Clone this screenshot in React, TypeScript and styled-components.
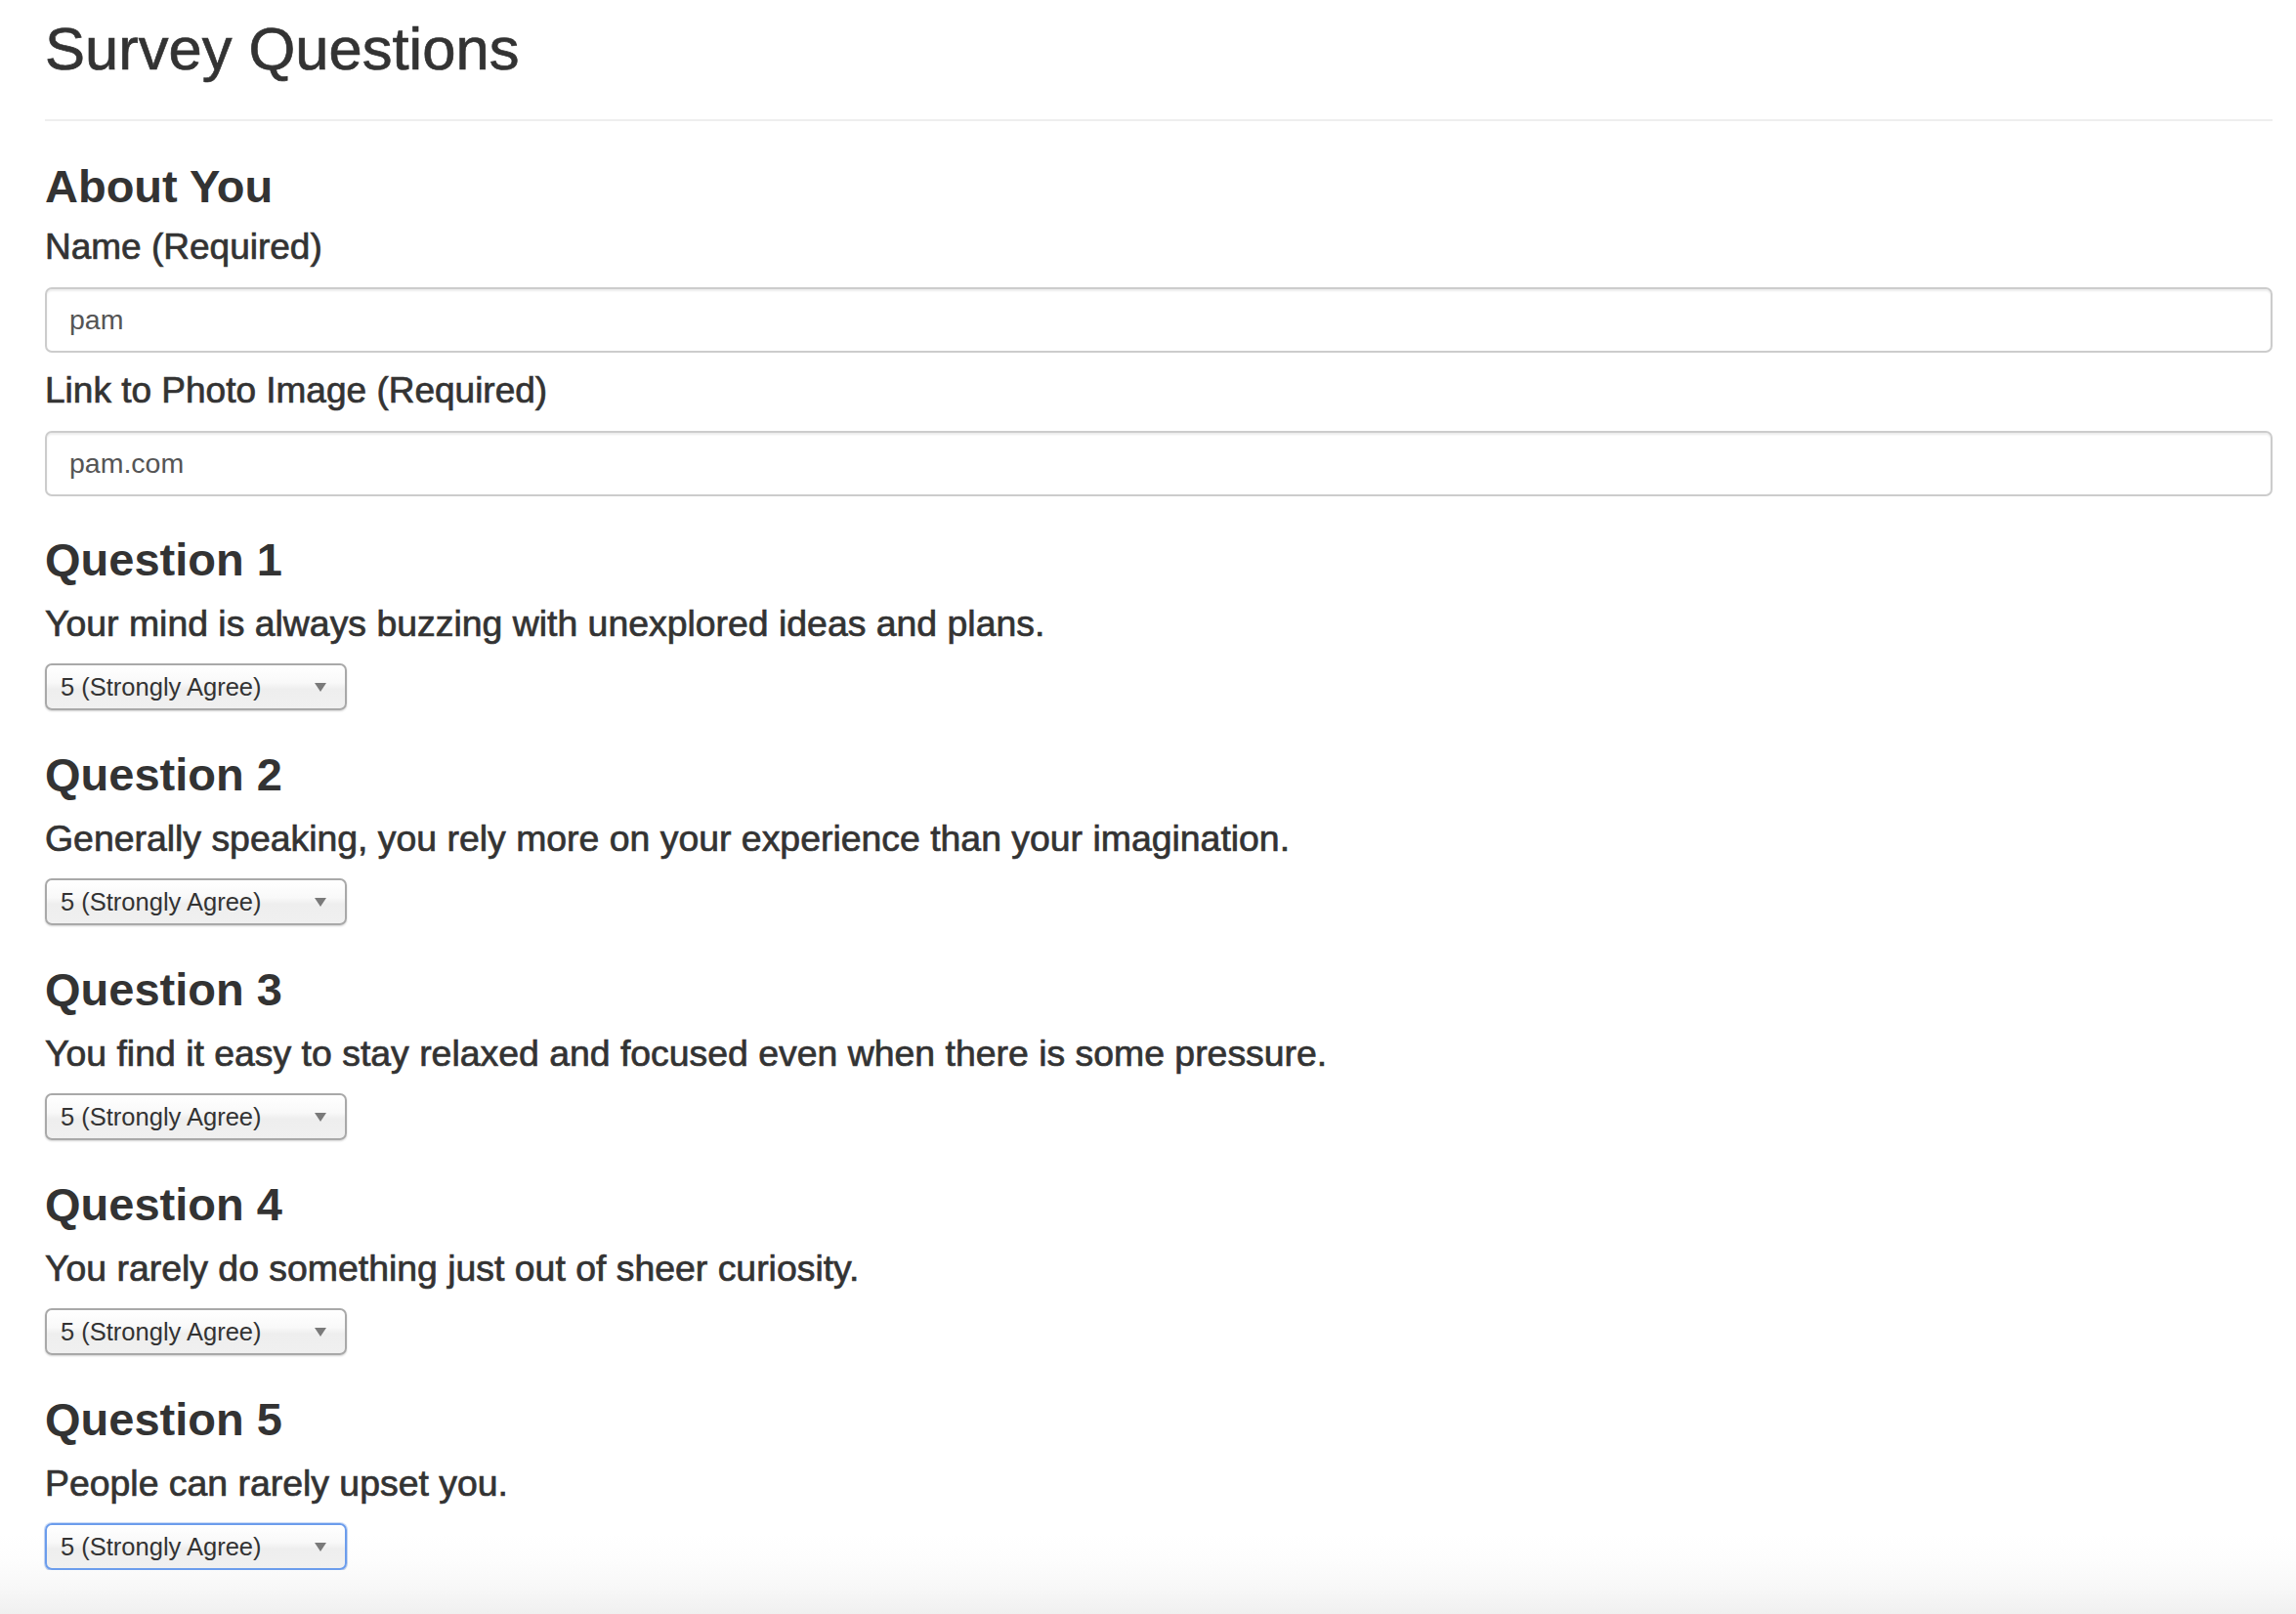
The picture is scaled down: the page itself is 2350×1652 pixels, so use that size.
import React from "react";
import styled, { createGlobalStyle } from "styled-components";

const GlobalStyle = createGlobalStyle`
  html {
    min-height: 100%;
    background: linear-gradient(
      to bottom,
      #ffffff 0,
      #ffffff calc(100% - 82px),
      #fdfdfd calc(100% - 56px),
      #f8f8f8 calc(100% - 28px),
      #f0f0f0 100%
    );
  }
  body {
    margin: 0;
    background: transparent;
    font-family: "Liberation Sans", Arial, Helvetica, sans-serif;
    color: #333333;
  }
  * { box-sizing: border-box; }
`;

const Page = styled.main`
  padding: 0 24px 0 46px;
  display: flex;
  flex-direction: column;
`;

const Title = styled.h1`
  margin: 16px 0 0;
  font-size: 61.5px;
  line-height: 68px;
  font-weight: 400;
  -webkit-text-stroke: 0.7px #333333;
  color: #333333;
`;

const Divider = styled.hr`
  margin: 38px 0 0;
  border: 0;
  border-top: 2px solid #eeeeee;
  height: 0;
`;

const SectionHeading = styled.h2<{ $gap: number }>`
  margin: ${(p) => p.$gap}px 0 0;
  font-size: 47px;
  line-height: 52px;
  font-weight: 700;
  color: #333333;
`;

const Label = styled.label<{ $gap: number; $size?: number }>`
  display: block;
  margin-top: ${(p) => p.$gap}px;
  font-size: ${(p) => p.$size ?? 37}px;
  line-height: 44px;
  font-weight: 400;
  -webkit-text-stroke: 0.7px #333333;
  color: #333333;
`;

const TextInput = styled.input`
  display: block;
  width: 100%;
  height: 67px;
  margin-top: 19px;
  padding: 0 23px;
  border: 2px solid #cccccc;
  border-radius: 7px;
  box-shadow: inset 0 2px 2px rgba(0, 0, 0, 0.075);
  font-family: "Liberation Sans", Arial, Helvetica, sans-serif;
  font-size: 28.5px;
  color: #555555;
  background: #ffffff;
  outline: none;
`;

const SelectWrap = styled.div`
  position: relative;
  width: 309px;
  height: 48px;
  margin-top: 19px;
`;

const Select = styled.select<{ $focused?: boolean }>`
  appearance: none;
  -webkit-appearance: none;
  width: 100%;
  height: 100%;
  padding: 0 40px 0 14px;
  border: 2px solid ${(p) => (p.$focused ? "#6b9cec" : "#a9a9a9")};
  border-radius: 7px;
  background: linear-gradient(
    to bottom,
    #ffffff 0%,
    #f9f9f9 40%,
    #eeeeee 55%,
    #f0f0f0 100%
  );
  box-shadow: ${(p) =>
    p.$focused
      ? "0 0 0 1px rgba(107, 156, 236, 0.35), 0 1px 2px rgba(0, 0, 0, 0.15)"
      : "0 1px 2px rgba(0, 0, 0, 0.18)"};
  font-family: "Liberation Sans", Arial, Helvetica, sans-serif;
  font-size: 25.5px;
  color: #333333;
  outline: none;
`;

const Arrow = styled.span`
  position: absolute;
  right: 21px;
  top: 20px;
  width: 0;
  height: 0;
  border-left: 6px solid transparent;
  border-right: 6px solid transparent;
  border-top: 9px solid #7a7a7a;
  pointer-events: none;
`;

const options = [
  "1 (Strongly Disagree)",
  "2",
  "3",
  "4",
  "5 (Strongly Agree)",
];

const questions = [
  "Your mind is always buzzing with unexplored ideas and plans.",
  "Generally speaking, you rely more on your experience than your imagination.",
  "You find it easy to stay relaxed and focused even when there is some pressure.",
  "You rarely do something just out of sheer curiosity.",
  "People can rarely upset you.",
];

function Dropdown({ focused }: { focused?: boolean }) {
  return (
    <SelectWrap>
      <Select $focused={focused} defaultValue={options[4]}>
        {options.map((o) => (
          <option key={o} value={o}>
            {o}
          </option>
        ))}
      </Select>
      <Arrow />
    </SelectWrap>
  );
}

export default function App() {
  return (
    <>
      <GlobalStyle />
      <Page>
        <Title>Survey Questions</Title>
        <Divider />
        <SectionHeading $gap={41}>About You</SectionHeading>
        <Label $gap={14}>Name (Required)</Label>
        <TextInput type="text" defaultValue="pam" />
        <Label $gap={17}>Link to Photo Image (Required)</Label>
        <TextInput type="text" defaultValue="pam.com" />
        {questions.map((q, i) => (
          <React.Fragment key={i}>
            <SectionHeading $gap={i === 0 ? 39 : 40}>Question {i + 1}</SectionHeading>
            <Label $gap={17} $size={37.4}>
              {q}
            </Label>
            <Dropdown focused={i === questions.length - 1} />
          </React.Fragment>
        ))}
      </Page>
    </>
  );
}
